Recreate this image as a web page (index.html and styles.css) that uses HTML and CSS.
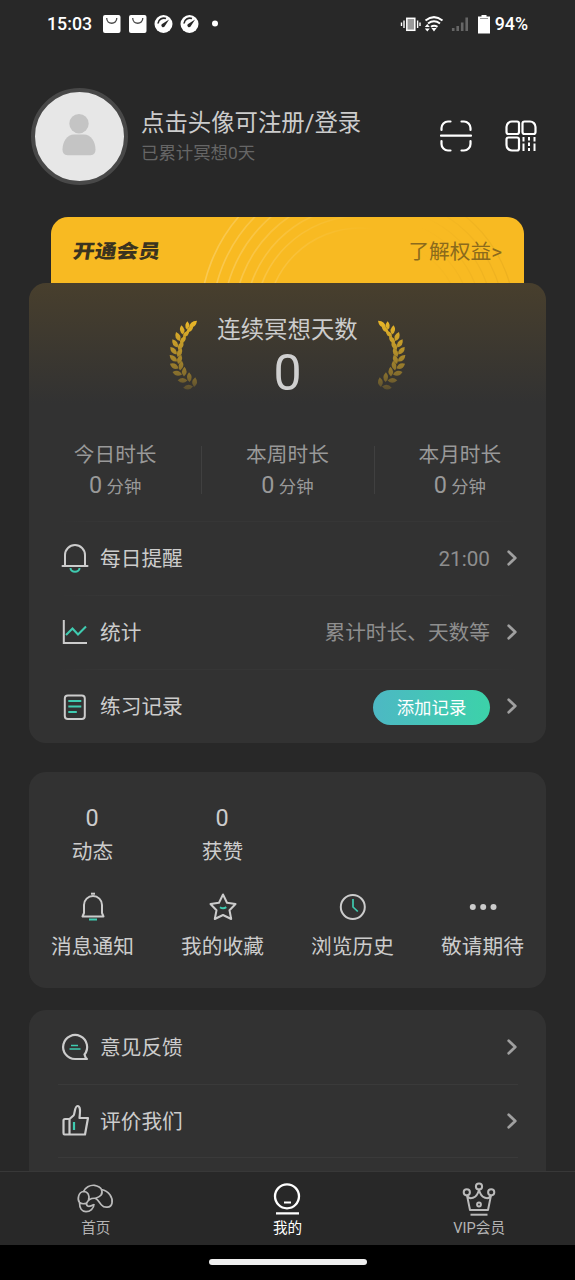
FILE: index.html
```html
<!DOCTYPE html>
<html lang="zh-CN">
<head>
<meta charset="utf-8">
<title>我的</title>
<link rel="stylesheet" href="styles.css">
</head>
<body>
<svg class="defs" width="0" height="0" aria-hidden="true">
  <defs>
    <path id="leaf" d="M0 0Q4.200-5.200 9.800-.8Q5 4.400 0 0Z"/>
    <linearGradient id="fade" x1="0" y1="0" x2="0" y2="1"><stop offset="0" stop-color="#fff"/><stop offset=".35" stop-color="#bbb"/><stop offset=".75" stop-color="#666"/><stop offset="1" stop-color="#181818"/></linearGradient>
    <mask id="laurel-mask" maskUnits="userSpaceOnUse" x="0" y="0" width="44" height="80"><rect width="44" height="80" fill="url(#fade)"/></mask>
    <g id="laurel" mask="url(#laurel-mask)">
      <path d="M25 11Q13 24 12 38T20 61L29 70" fill="none" stroke="#3d3420" stroke-width="1"/>
      <g fill="#f2bd28">
        <use href="#leaf" transform="translate(24 12) rotate(-38) scale(1.1 1)"/>
        <use href="#leaf" transform="translate(22 13.500) rotate(-82) scale(.85)"/>
        <use href="#leaf" transform="translate(21.500 16) rotate(-32) scale(.85)"/>
        <use href="#leaf" transform="translate(18 18.500) rotate(-96) scale(.95)"/>
        <use href="#leaf" transform="translate(18 21) rotate(-40) scale(.9)"/>
        <use href="#leaf" transform="translate(14.800 25) rotate(-108)"/>
        <use href="#leaf" transform="translate(15.200 27.500) rotate(-48) scale(.95)"/>
        <use href="#leaf" transform="translate(12.700 31.500) rotate(-118)"/>
        <use href="#leaf" transform="translate(13.200 34) rotate(-54)"/>
        <use href="#leaf" transform="translate(11.700 38.500) rotate(-126)"/>
        <use href="#leaf" transform="translate(12.500 41) rotate(-60)"/>
        <use href="#leaf" transform="translate(12 45.500) rotate(-134)"/>
        <use href="#leaf" transform="translate(13 48) rotate(-66)"/>
        <use href="#leaf" transform="translate(13.500 52.500) rotate(-146)"/>
        <use href="#leaf" transform="translate(15 54.500) rotate(-74)"/>
        <use href="#leaf" transform="translate(17 58.500) rotate(-160)"/>
        <use href="#leaf" transform="translate(19 60.500) rotate(-82)"/>
        <use href="#leaf" transform="translate(22.500 64.500) rotate(-174)"/>
        <use href="#leaf" transform="translate(24.500 66) rotate(-88)"/>
        <use href="#leaf" transform="translate(28 70.500) rotate(178)"/>
        <use href="#leaf" transform="translate(29 71) rotate(-78)"/>
      </g>
    </g>
    <g id="gauge"><circle cx="9" cy="9" r="9" fill="#fff"/><path d="M3.500 8.500A6 6 0 0 1 11.500 3.500" fill="none" stroke="#282828" stroke-width="1.700"/><path d="M14.600 4.400L7.200 9.200A1.900 1.900 0 0 0 9.900 11.800Z" fill="#282828"/></g>
    <g id="bag"><rect width="17.500" height="18" rx="2" fill="#fff"/><path d="M3.700 3C3.700 10 13.800 10 13.800 3" fill="none" stroke="#484848" stroke-width="1.300"/></g>
    <path id="chev" d="M1.700 1.700L8.300 8L1.700 14.300" fill="none" stroke="#a0a0a0" stroke-width="2.700" stroke-linecap="round" stroke-linejoin="round"/>
  </defs>
</svg>
<div class="screen">
  <div class="statusbar">
    <span class="time">15:03</span>
    <svg width="120" height="20" viewBox="0 0 120 20"><use href="#bag" x="1" y="1"/><use href="#bag" x="27" y="1"/><use href="#gauge" x="52.500" y="1"/><use href="#gauge" x="78.500" y="1"/><circle cx="113" cy="9.500" r="3" fill="#fff"/></svg>
    <svg class="system" width="92" height="22" viewBox="0 0 92 22" fill="none" stroke="#fff">
      <rect x="6.800" y="5.300" width="8" height="12" fill="#999" stroke-width="1.500"/><path d="M4 7.500v7.500M1.500 9.500v3.500M17.600 7.500v7.500M20 9.500v3.500" stroke-width="1.400"/>
      <path d="M25.500 7.500Q34 .8 42.500 7.500M28 10.500Q34 6 40 10.500M31 13.800Q34 11.500 37.500 13.800" stroke-width="2"/><path d="M34 18.500l2.600-3.400h-5.200zM24.800 14h5l-2.500-3zM24.800 15.500h5l-2.500 3z" fill="#fff" stroke="none"/>
      <path d="M53.200 18v-3M57.700 18v-5M62.200 18v-8.500M66.700 18V4.500" stroke="#666" stroke-width="2.600"/>
      <path d="M78 3.500h3.500V2h5v1.500H90v17H78z" fill="#fff" stroke="none"/><path d="M80 5.500h8" stroke="#999" stroke-width="1"/>
    </svg>
    <span class="battery">94%</span>
  </div>

  <header class="profile">
    <div class="avatar"><svg width="34" height="42" viewBox="0 0 34 42" fill="#c4c4c4"><circle cx="17" cy="9.700" r="9.700"/><path d="M12 20.500h10C29 20.500 33.500 28 33.500 35.500C33.500 40 31 41.300 27 41.300H7C3 41.300 .5 40 .5 35.500C.5 28 5 20.500 12 20.500Z"/></svg></div>
    <div class="who"><div class="login">点击头像可注册/登录</div><div class="total">已累计冥想0天</div></div>
    <div class="tools">
      <svg width="32" height="32" viewBox="0 0 32 32" fill="none" stroke="#fff" stroke-width="2.200" stroke-linecap="round"><path d="M1.500 10V8A6.500 6.500 0 0 1 8 1.500H10.500M21.500 1.500H24A6.500 6.500 0 0 1 30.500 8V10M30.500 21v3A6.500 6.500 0 0 1 24 30.500H21.500M10.500 30.500H8A6.500 6.500 0 0 1 1.500 24V21M1 15.700H31"/></svg>
      <svg width="32" height="32" viewBox="0 0 32 32" fill="none" stroke="#fff" stroke-width="2.200"><path d="M7 1.500H12Q14 1.500 14 3.500V12Q14 14 12 14H3.500Q1.500 14 1.500 12V7A5.500 5.500 0 0 1 7 1.500ZM19.500 1.500H25A5.500 5.500 0 0 1 30.500 7V12Q30.500 14 28.500 14H19.500Q17.500 14 17.500 12V3.500Q17.500 1.500 19.500 1.500ZM3.500 17.500H12Q14 17.500 14 19.500V28.500Q14 30.500 12 30.500H7A5.500 5.500 0 0 1 1.500 25V19.500Q1.500 17.500 3.500 17.500Z"/><path d="M18.500 17v4.500M24 17v3.500M29.500 17v4.500M18.500 23.500v7.500M24 22.500v3.500M24 28v3M29.500 23.500v7.500" stroke-width="2"/></svg>
    </div>
  </header>

  <main>
    <section class="vip">
      <svg class="arcs" width="473" height="66" viewBox="51 217 473 66" fill="none">
        <defs>
          <linearGradient id="arc-fade" gradientUnits="userSpaceOnUse" x1="205" y1="0" x2="375" y2="0"><stop stop-color="#fff" stop-opacity=".22"/><stop offset="1" stop-color="#fff" stop-opacity="0"/></linearGradient>
          <linearGradient id="arc-dark" gradientUnits="userSpaceOnUse" x1="420" y1="0" x2="510" y2="0"><stop stop-color="#99690b" stop-opacity="0"/><stop offset="1" stop-color="#99690b" stop-opacity=".12"/></linearGradient>
        </defs>
        <g stroke="url(#arc-fade)" stroke-width="1.600"><circle cx="360" cy="321" r="93"/><circle cx="360" cy="321" r="105"/><circle cx="360" cy="321" r="115"/><circle cx="360" cy="321" r="126"/><circle cx="360" cy="321" r="137"/><circle cx="360" cy="321" r="148"/><circle cx="360" cy="321" r="160"/></g>
        <g stroke="url(#arc-dark)" stroke-width="1.300"><circle cx="380" cy="321" r="135"/><circle cx="380" cy="321" r="124"/><circle cx="380" cy="321" r="113"/><circle cx="380" cy="321" r="102"/><circle cx="380" cy="321" r="91"/><circle cx="380" cy="321" r="80"/></g>
      </svg>
      <span class="vip-name">开通会员</span><span class="vip-more">了解权益&gt;</span>
    </section>

    <section class="card summary">
      <div class="streak">
        <svg class="laurel" width="44" height="80" viewBox="0 0 44 80"><use href="#laurel"/></svg>
        <div class="days"><div class="days-label">连续冥想天数</div><div class="days-value">0</div></div>
        <svg class="laurel flip" width="44" height="80" viewBox="0 0 44 80"><use href="#laurel"/></svg>
      </div>
      <div class="stats">
        <div class="stat"><div>今日时长</div><div class="amount"><b>0</b> 分钟</div></div>
        <div class="stat"><div>本周时长</div><div class="amount"><b>0</b> 分钟</div></div>
        <div class="stat"><div>本月时长</div><div class="amount"><b>0</b> 分钟</div></div>
      </div>
      <div class="row"><svg class="icon" width="28" height="30" viewBox="0 0 28 30" fill="none" stroke="#ccc" stroke-width="2"><path d="M1.500 23H26.500M4 23V12A10 10 0 0 1 24 12V23" stroke-linecap="round"/><path d="M9.500 25A4.500 3.800 0 0 0 18.500 25" stroke="#3fcbb0"/></svg><span>每日提醒</span><span class="value">21:00</span><svg class="chev" width="10" height="16"><use href="#chev"/></svg></div>
      <div class="row"><svg class="icon" width="28" height="30" viewBox="0 0 28 30" fill="none" stroke="#ccc" stroke-width="2"><path d="M2.800 4V26H25" stroke-linecap="square"/><path d="M5 18L11.500 11.500L17 17.500L25 9.500" stroke="#3fcbb0" stroke-width="2.100"/></svg><span>统计</span><span class="value">累计时长、天数等</span><svg class="chev" width="10" height="16"><use href="#chev"/></svg></div>
      <div class="row"><svg class="icon" width="28" height="30" viewBox="0 0 28 30" fill="none" stroke="#ccc" stroke-width="2"><rect x="3.800" y="4.500" width="20" height="23.500" rx="3"/><path d="M7.300 10h13M7.300 15.500h13M7.300 21h8.500" stroke="#3fcbb0"/></svg><span>练习记录</span><span class="pill">添加记录</span><svg class="chev" width="10" height="16"><use href="#chev"/></svg></div>
    </section>

    <section class="card social">
      <div class="cell"><span class="num">0</span><span>动态</span></div>
      <div class="cell"><span class="num">0</span><span>获赞</span></div>
      <div class="cell link"><svg width="30" height="30" viewBox="0 0 30 30" fill="none" stroke="#ccc" stroke-width="2"><path d="M4.500 24.500H25.500L24 21V13A9 9 0 0 0 6 13V21Z" stroke-linejoin="round"/><path d="M13 1.700H17"/><path d="M11 27.500H19" stroke="#3fcbb0"/></svg><span>消息通知</span></div>
      <div class="cell link"><svg width="30" height="30" viewBox="0 0 30 30" fill="none" stroke="#ccc" stroke-width="2"><path d="M15 2.500L19 10.800L27.500 12L21.500 18.300L23.200 27L15 23L6.800 27L8.500 18.300L2.500 12L11 10.800Z" stroke-linejoin="round"/><path d="M12 15.200Q15 17.400 18.300 15.200" stroke="#3fcbb0"/></svg><span>我的收藏</span></div>
      <div class="cell link"><svg width="30" height="30" viewBox="0 0 30 30" fill="none" stroke="#ccc" stroke-width="2"><circle cx="14.800" cy="15" r="12"/><path d="M15 7v8l4.800 4.500" stroke="#3fcbb0" stroke-width="1.700"/></svg><span>浏览历史</span></div>
      <div class="cell link"><svg width="30" height="30" viewBox="0 0 30 30" fill="#ccc"><circle cx="4.800" cy="15" r="3"/><circle cx="15.200" cy="15" r="3"/><circle cx="25.500" cy="15" r="3"/></svg><span>敬请期待</span></div>
    </section>

    <section class="card more">
      <div class="row"><svg class="icon" width="28" height="30" viewBox="0 0 28 30" fill="none" stroke="#ccc" stroke-width="2.200"><path d="M23.500 22.500A12 12 0 1 0 14 27H26Q24.200 25.500 23.500 22.500Z" stroke-linejoin="round"/><path d="M10 13.500h7M8.500 17h11" stroke="#3fcbb0" stroke-width="1.700"/></svg><span>意见反馈</span><svg class="chev" width="10" height="16"><use href="#chev"/></svg></div>
      <div class="row"><svg class="icon" width="28" height="30" viewBox="0 0 28 30" fill="none" stroke="#ccc" stroke-width="2.200" stroke-linejoin="round"><path d="M8.500 13L12.500 9.500C14 8 13.500 0 16.500 0C20 0 19 7 18.500 12H27L24 28.500H3.500Q2.500 28.500 2.500 27V14.500Q2.500 13 4 13ZM8.500 13V28.500"/><path d="M13 16V24" stroke="#3fcbb0"/></svg><span>评价我们</span><svg class="chev" width="10" height="16"><use href="#chev"/></svg></div>
    </section>
  </main>

  <nav class="tabs">
    <div class="tab"><svg width="38" height="34" viewBox="0 0 38 34" fill="none" stroke="#bbb" stroke-width="1.700"><path d="M6.500 8.500C8 4.500 13 1.800 17.500 2.300C21 2.800 24 5 24.500 6.500C32 8 36 14.500 35 20C34 25.500 27 25 24.500 22C22.500 20 21.500 17 18.500 15.300"/><path d="M6.500 8.500C1.500 9 0 16 2.500 19.500C5.500 22 8 20 9.500 20.500C11 16.500 14 15 18.500 15.300C23 14 26.500 11.500 24.500 6.500M6.500 8.500C11 8.500 13 12.500 11.500 17M2.500 19.500C2.500 25.500 5 28.700 9 28.700C13 28.700 17 25.500 17 21M9.500 20.500Q9.500 25.500 17 21.500"/></svg><span>首页</span></div>
    <div class="tab active"><svg width="38" height="34" viewBox="0 0 38 34" fill="none" stroke="#fff" stroke-width="2.300"><circle cx="19" cy="13.300" r="12"/><path d="M16 19.500h7M8 30.300h23" stroke-width="2.200"/></svg><span>我的</span></div>
    <div class="tab"><svg width="38" height="34" viewBox="0 0 38 34" fill="none" stroke="#bbb" stroke-width="2"><circle cx="19" cy="3.500" r="3.100"/><circle cx="6.800" cy="9.300" r="3.100"/><circle cx="31.200" cy="9.300" r="3.100"/><path d="M7 12.400L10 27H28L31 12.400C29 17 21 16 19 6.600C17 16 9 17 7 12.400Z" stroke-linejoin="round"/><circle cx="19" cy="21.500" r="1.900"/><path d="M10.500 31.700h17"/></svg><span>VIP会员</span></div>
  </nav>
  <div class="gesture"><div class="handle"></div></div>
</div>
</body>
</html>
```
FILE: styles.css
```css
* { box-sizing: border-box; }
body { margin: 0; background: #282828; color: #ccc; font-family: Roboto, "Noto Sans CJK SC", sans-serif; font-size: 20.7px; font-weight: 400; line-height: 30px; }
svg { display: block; flex: none; overflow: visible; }
.defs { height: 0; }
.screen { width: 575px; height: 1280px; display: flex; flex-direction: column; overflow: hidden; }
.statusbar { flex: none; height: 48px; padding: 0 47px; display: flex; align-items: center; color: #fff; font-size: 17.8px; font-weight: 500; }
.statusbar .time { width: 55px; }
.statusbar .system { margin-left: auto; }
.statusbar .battery { width: 36px; text-align: right; }
.profile { flex: none; height: 169px; padding: 40px 38px 0 31px; display: flex; align-items: flex-start; }
.avatar { width: 97px; height: 97px; flex: none; border: 4.500px solid #484848; border-radius: 50%; background: #e7e7e7; display: flex; justify-content: center; padding: 22px 1px 0 0; }
.who { margin-left: 13px; padding-top: 18px; white-space: nowrap; }
.login { font-size: 23.4px; line-height: 34px; }
.total { font-size: 17.4px; line-height: 27px; color: #666; }
.tools { margin-left: auto; padding-top: 32px; display: flex; gap: 33px; }
main { flex: 1; min-height: 0; overflow: hidden; padding: 0 29px; }
.vip { position: relative; height: 66px; margin: 0 22px; padding: 4px 22px 0; display: flex; align-items: center; justify-content: space-between; overflow: hidden; border-radius: 17px 17px 0 0; background: #f8ba22; }
.arcs { position: absolute; inset: 0; }
.vip-name { position: relative; color: #3a331f; font-size: 21.8px; font-weight: 900; transform: skewX(-9deg) scaleY(.88); }
.vip-more { position: relative; color: #8b6a1c; }
.card { background: #323232; border-radius: 17px; }
.summary { height: 460px; background: linear-gradient(#483f2d, #323232 120px); }
.streak { height: 158px; padding-top: 33px; display: flex; justify-content: center; }
.laurel { width: 44px; }
.flip { transform: scaleX(-1); }
.days { width: 157px; text-align: center; }
.days-label { font-size: 23.4px; line-height: 28px; white-space: nowrap; }
.days-value { font-size: 50px; font-weight: 400; line-height: 59px; color: #d0d0d0; }
.stats { height: 80px; padding-top: 1px; display: grid; grid-template-columns: repeat(3, 1fr); text-align: center; color: #999; align-items: start; }
.stat { height: 60px; }
.stat + .stat { background: linear-gradient(#404040, #404040) left 4px / 1px 48px no-repeat; }
.stat > div { height: 30px; line-height: 26px; }
.amount { font-size: 17.4px; }
.amount b { font-size: 23.4px; font-weight: 400; }
.row { position: relative; height: 74px; padding: 0 29px 0 32px; display: flex; align-items: center; background: linear-gradient(90deg, transparent, #363636 10%, #363636 90%, transparent) 29px 0 / 460px 1px no-repeat; }
.row > span { padding-top: 2px; }
.icon { margin-right: 11px; }
.chev { margin-left: 17px; }
.value { margin-left: auto; color: #8e8e8e; }
.row > .pill { margin: 2px 0 0 auto; padding: 0; width: 117px; height: 35px; border-radius: 18px; background: linear-gradient(90deg, #4db8c4, #3cd2a9); color: #fff; font-size: 17.4px; line-height: 36px; text-align: center; }
.social { height: 216px; margin: 29px 0 22px; padding: 31px 0 0; display: grid; grid-template-columns: repeat(4, 130px); grid-template-rows: 88px 1fr; justify-content: center; }
.cell { grid-column: span 1; display: flex; flex-direction: column; align-items: center; line-height: 32px; }
.cell:nth-child(3) { grid-column: 1; }
.num { font-size: 23.4px; line-height: 32px; margin: -1px 1px 2px 0; }
.link svg { margin: 1px 0 9px; }
.more { height: 230px; }
.more .row:first-child { background: none; }
.more .row .chev { margin-left: auto; }
.more .row + .row { background: linear-gradient(#3a3a3a, #3a3a3a) 29px 0 / 460px 1px no-repeat, linear-gradient(#3a3a3a, #3a3a3a) 29px 100% / 460px 1px no-repeat; }
.tabs { flex: none; height: 74px; border-top: 1px solid #383838; display: grid; grid-template-columns: repeat(3, 1fr); color: #b4b4b4; font-size: 14.6px; line-height: 20px; }
.tab { display: flex; flex-direction: column; align-items: center; padding-top: 11px; }
.tab svg { margin-bottom: 1px; }
.tab.active { color: #fff; }
.gesture { flex: none; height: 35px; background: #000; display: flex; justify-content: center; padding-top: 14px; }
.handle { width: 158px; height: 6px; border-radius: 3px; background: #eee; }
```
